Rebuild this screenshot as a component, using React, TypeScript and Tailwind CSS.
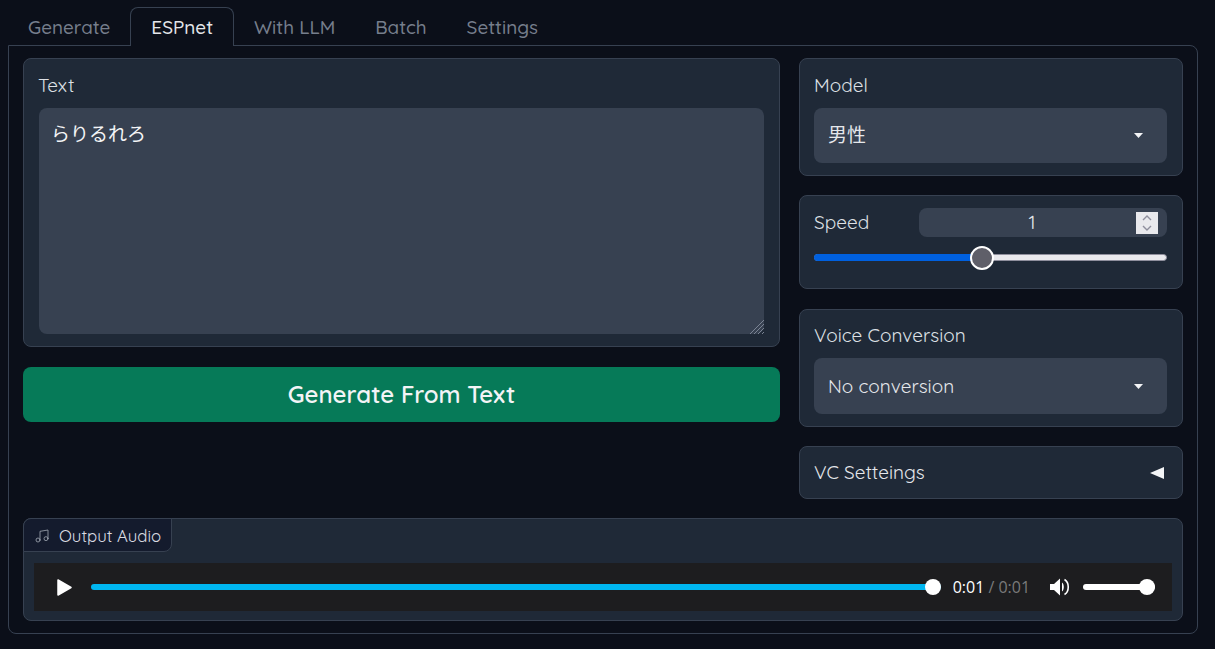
import { Music } from "lucide-react";

function Block({ className, children }: { className: string; children: React.ReactNode }) {
  return <div className={`rounded-lg border border-[#374151] bg-[#1f2937] ${className}`}>{children}</div>;
}

function Caret() {
  return (
    <svg width="9" height="5" viewBox="0 0 9 5" className="ml-auto mr-[4px]">
      <path d="M0 0h9L4.5 5z" fill="#f3f4f6" />
    </svg>
  );
}

function SelectBlock({ label, value, className, boxClass }: { label: string; value: string; className: string; boxClass: string }) {
  return (
    <Block className={`flex flex-col pl-[14px] pr-[15px] ${className}`}>
      <span className="text-[19px] leading-[28px] text-[#dde0e5]">{label}</span>
      <div className={`flex items-center rounded-lg bg-[#374151] pl-[14px] pr-[20px] text-[19px] text-[#e5e7eb] ${boxClass}`}>
        {value}
        <Caret />
      </div>
    </Block>
  );
}

export default function App() {
  const tabs = ["Generate", "ESPnet", "With LLM", "Batch", "Settings"];
  return (
    <div className="h-[649px] w-[1215px] overflow-hidden bg-[#0b0f19] px-[8px] pt-[7px] font-['Quicksand','Noto_Sans','Noto_Sans_CJK_JP',sans-serif] font-normal">
      <div className="relative z-10 flex h-[39px]">
        {tabs.map((t) =>
          t === "ESPnet" ? (
            <div key={t} className="flex h-[39px] items-center rounded-t-lg border border-b-0 border-[#374151] bg-[#0b0f19] px-[20px] pt-px text-[18.9px] font-medium text-[#e5e7eb]">
              {t}
            </div>
          ) : (
            <div key={t} className="flex h-[39px] items-center px-[20px] pt-px text-[18.9px] font-medium text-[#767e8c]">
              {t}
            </div>
          ),
        )}
      </div>
      <div className="-mt-px h-[589px] w-[1190px] rounded-b-lg rounded-tr-lg border border-[#374151] px-[14px] pt-[12px]">
        <div className="flex gap-[19px]">
          <div className="flex w-[757px] flex-col gap-[20px]">
            <Block className="h-[289px] px-[15px] pt-[12px]">
              <span className="ml-[-1px] text-[19px] leading-[28px] text-[#dde0e5]">Text</span>
              <div className="relative mt-[9px] h-[226px] rounded-lg bg-[#374151] px-[12px] py-[12px] text-[19px] leading-[26px] text-[#f3f4f6]">
                <span className="font-['Noto_Sans_CJK_JP',sans-serif] font-normal">らりるれろ</span>
                <svg width="15" height="15" viewBox="0 0 15 15" className="absolute bottom-0 right-0" stroke="#7b8494">
                  <path d="M15 1 1 15M15 5 5 15M15 9l-6 6M15 13l-2 2" />
                </svg>
              </div>
            </Block>
            <button className="h-[55px] rounded-lg bg-[#067a58] pb-[2px] text-[24px] font-semibold text-[#f3f4f6]">Generate From Text</button>
          </div>
          <div className="flex w-[384px] flex-col">
            <SelectBlock label="Model" value="男性" className="h-[118px] pt-[12px]" boxClass="mt-[9px] h-[55px]" />
            <Block className="mt-[19px] h-[94px] pl-[14px] pr-[15px] pt-[12px]">
              <div className="flex items-center justify-between">
                <span className="text-[19px] leading-[27px] text-[#dde0e5]">Speed</span>
                <div className="relative flex h-[29px] w-[248px] items-center justify-center rounded-lg bg-[#374151] pr-[22px] text-[19px] text-[#e5e7eb]">
                  1
                  <div className="absolute right-[9px] top-[4px] flex h-[22px] w-[22px] items-center justify-center bg-[#e9e9ed]">
                    <svg width="12" height="18" viewBox="0 0 12 18" fill="none" stroke="#8f8f9d" strokeWidth="1.4">
                      <path d="M2 6l4-4 4 4M2 12l4 4 4-4" />
                    </svg>
                  </div>
                </div>
              </div>
              <div className="relative mt-[9px] h-[24px]">
                <div className="absolute left-0 right-0 top-[8px] h-[7px] rounded-full border border-[#8f8f9d] bg-[#e9e9ed]" />
                <div className="absolute left-0 top-[8px] h-[7px] w-[168px] rounded-l-full bg-[#0060df]" />
                <div className="absolute left-[156px] top-0 h-[24px] w-[24px] rounded-full border-2 border-white bg-[#5f5f69]" />
              </div>
            </Block>
            <SelectBlock label="Voice Conversion" value="No conversion" className="mt-[20px] h-[118px] pt-[11px]" boxClass="mt-[9px] h-[56px]" />
            <Block className="mt-[19px] flex h-[53px] items-center justify-between pl-[14px] pr-[18px]">
              <span className="text-[19px] text-[#e5e7eb]">VC Setteings</span>
              <svg width="14" height="12" viewBox="0 0 14 12"><path d="M14 0v12L0 6z" fill="#f3f4f6" /></svg>
            </Block>
          </div>
        </div>
        <Block className="relative mt-[19px] h-[103px] w-[1160px] px-[10px] pt-[44px]">
          <div className="absolute left-[-1px] top-[-1px] flex h-[34px] items-center gap-[9px] rounded-br-lg rounded-tl-lg border border-[#374151] bg-[#141b2d] pl-[10px] pr-[10px] pt-px text-[16.8px] text-[#d9dce2]">
            <Music size={16} strokeWidth={1.25} className="text-[#9ca3af]" />
            Output Audio
          </div>
          <div className="flex h-[48px] items-center bg-[#1d1d1f] pl-[23px] pr-[17px]">
            <svg width="15" height="17" viewBox="0 0 15 17" fill="white" stroke="white" strokeWidth="1.5" strokeLinejoin="round">
              <path d="M1 1 14 8.5 1 16z" />
            </svg>
            <div className="relative ml-[19px] h-[6px] w-[850px] rounded-full bg-[#00b7f1]">
              <div className="absolute right-0 top-[-5px] h-[16px] w-[16px] rounded-full bg-white" />
            </div>
            <span className="ml-[12px] font-['Open_Sans',sans-serif] text-[16px] text-white">0:01</span>
            <span className="ml-[4px] font-['Open_Sans',sans-serif] text-[16px] text-[#7a7a7a]">/ 0:01</span>
            <svg width="20" height="18" viewBox="0 0 20 18" className="ml-[20px]" fill="white">
              <path d="M0 6h4L10 0.5v17L4 12H0z" />
              <path d="M12 4.5c2.4 1.6 2.4 7.4 0 9z" />
              <path d="M14.5 1.5c5 2.8 5 12.2 0 15" fill="none" stroke="white" strokeWidth="1.6" />
            </svg>
            <div className="relative ml-[13px] h-[6px] w-[72px] rounded-full bg-white">
              <div className="absolute right-0 top-[-5px] h-[16px] w-[16px] rounded-full bg-white" />
            </div>
          </div>
        </Block>
      </div>
    </div>
  );
}
